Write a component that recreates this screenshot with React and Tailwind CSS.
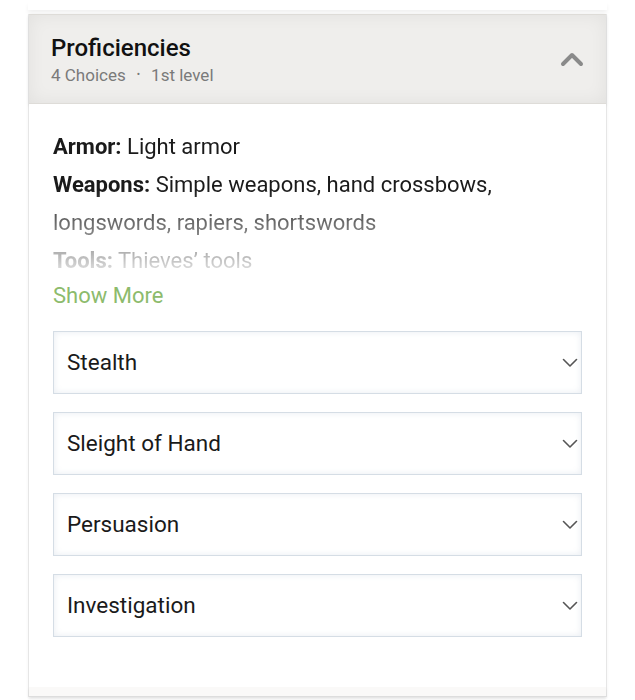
import React from 'react';

const skills = ['Stealth', 'Sleight of Hand', 'Persuasion', 'Investigation'];

function ChevronDown() {
    return (
        <svg width="16" height="10" viewBox="0 0 16 10" fill="none">
            <path d="M1.5 1.5 L8 8 L14.5 1.5" stroke="#555" strokeWidth="1.6" strokeLinecap="round" strokeLinejoin="round" />
        </svg>
    );
}

function ChevronUp() {
    return (
        <svg width="24" height="16" viewBox="0 0 24 16" fill="none">
            <path d="M3 13 L12 4 L21 13" stroke="#8a8a8a" strokeWidth="4" strokeLinecap="round" strokeLinejoin="round" />
        </svg>
    );
}

export default function App() {
    return (
        <div className="min-h-[700px] bg-white pt-[2px]" style={{ fontFamily: 'Roboto, "Liberation Sans", sans-serif' }}>
            {/* bottom edge of previous card */}
            <div className="mx-[28px] h-[8px] shadow-[0_3px_4px_rgba(0,0,0,0.06)]" />

            <div className="mx-[28px] mt-[4px] border-x border-[#e6e6e6] shadow-[0_1px_3px_rgba(0,0,0,0.05)]">
                {/* Header */}
                <div className="flex items-center justify-between h-[90px] pl-[22px] pr-[22px] bg-[#efeeec] border-y border-[#dedcd8] shadow-[inset_0_0_18px_rgba(0,0,0,0.06),0_2px_3px_rgba(0,0,0,0.08)]">
                    <div className="flex flex-col">
                        <div className="text-[24px] leading-[30px] font-medium text-[#111]">Proficiencies</div>
                        <div className="mt-[1px] text-[17px] leading-[22px] text-[#7a7a7a] flex items-center gap-[11px]">
                            <span>4 Choices</span>
                            <span className="text-[10px]">•</span>
                            <span>1st level</span>
                        </div>
                    </div>
                    <ChevronUp />
                </div>

                {/* Body */}
                <div className="px-[24px] pt-[24px] pb-[50px] bg-white">
                    <div className="text-[22px] leading-[38px] text-[#1a1a1a] [mask-image:linear-gradient(to_bottom,black_40%,rgba(0,0,0,0.05)_100%)]">
                        <p><span className="font-bold">Armor:</span> Light armor</p>
                        <p><span className="font-bold">Weapons:</span> Simple weapons, hand crossbows, longswords, rapiers, shortswords</p>
                        <p><span className="font-bold">Tools:</span> Thieves’ tools</p>
                    </div>
                    <div className="mt-[2px] text-[22px] leading-[28px] text-[#8dbb6c]">Show More</div>

                    <div className="mt-[21px] flex flex-col gap-[18px]">
                        {skills.map((s) => (
                            <div
                                key={s}
                                className="flex items-center justify-between h-[63px] pl-[13px] pr-[3px] bg-white border border-[#d5dde5] shadow-[inset_0_0_6px_rgba(120,150,180,0.18)]"
                            >
                                <span className="text-[22.5px] text-[#1a1a1a]">{s}</span>
                                <ChevronDown />
                            </div>
                        ))}
                    </div>
                </div>
                <div className="h-[10px] bg-[#faf9f8] border-b border-[#ddd] shadow-[0_2px_3px_rgba(0,0,0,0.08)]" />
            </div>
        </div>
    );
}
